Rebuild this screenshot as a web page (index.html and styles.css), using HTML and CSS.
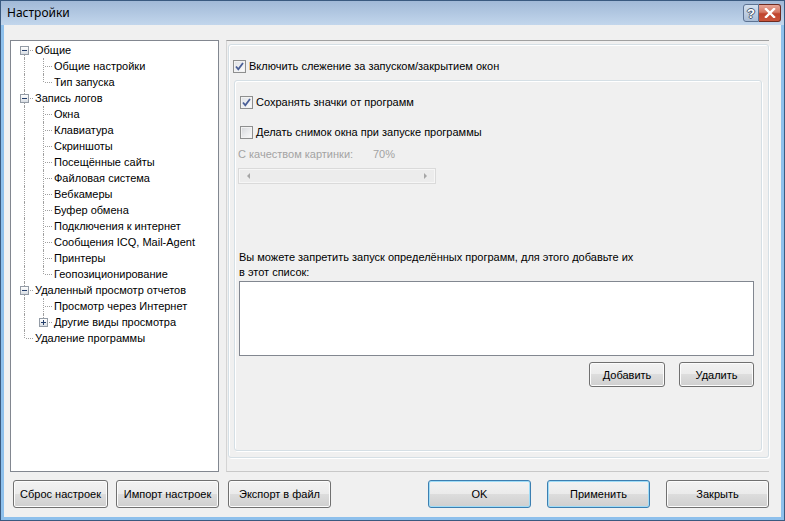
FILE: index.html
```html
<!DOCTYPE html>
<html lang="ru">

<head>
    <meta charset="UTF-8">
    <meta name="viewport" content="width=device-width, initial-scale=1.0">
    <title>Настройки</title>
    <link rel="stylesheet" href="styles.css">
</head>

<body>
    <div class="window">
        <div class="titlebar">
            <span class="title">Настройки</span>
            <div class="caption">
                <span class="capbtn help">?</span>
                <span class="capbtn close">
                    <svg width="12" height="10" viewBox="0 0 12 10">
                        <path d="M2 1 L10 9 M10 1 L2 9" stroke="#fff" stroke-width="2.4" stroke-linecap="square" fill="none"/>
                    </svg>
                </span>
            </div>
        </div>

        <div class="client">
            <div class="main">
                <div class="tree">
                    <div class="node"><span class="cell first"><span class="toggle"></span></span><span class="label">Общие</span></div>
                    <div class="node"><span class="cell line"></span><span class="cell mid"></span><span class="label">Общие настройки</span></div>
                    <div class="node"><span class="cell line"></span><span class="cell last"></span><span class="label">Тип запуска</span></div>
                    <div class="node"><span class="cell mid"><span class="toggle"></span></span><span class="label">Запись логов</span></div>
                    <div class="node"><span class="cell line"></span><span class="cell mid"></span><span class="label">Окна</span></div>
                    <div class="node"><span class="cell line"></span><span class="cell mid"></span><span class="label">Клавиатура</span></div>
                    <div class="node"><span class="cell line"></span><span class="cell mid"></span><span class="label">Скриншоты</span></div>
                    <div class="node"><span class="cell line"></span><span class="cell mid"></span><span class="label">Посещённые сайты</span></div>
                    <div class="node"><span class="cell line"></span><span class="cell mid"></span><span class="label">Файловая система</span></div>
                    <div class="node"><span class="cell line"></span><span class="cell mid"></span><span class="label">Вебкамеры</span></div>
                    <div class="node"><span class="cell line"></span><span class="cell mid"></span><span class="label">Буфер обмена</span></div>
                    <div class="node"><span class="cell line"></span><span class="cell mid"></span><span class="label">Подключения к интернет</span></div>
                    <div class="node"><span class="cell line"></span><span class="cell mid"></span><span class="label">Сообщения ICQ, Mail-Agent</span></div>
                    <div class="node"><span class="cell line"></span><span class="cell mid"></span><span class="label">Принтеры</span></div>
                    <div class="node"><span class="cell line"></span><span class="cell last"></span><span class="label">Геопозиционирование</span></div>
                    <div class="node"><span class="cell mid"><span class="toggle"></span></span><span class="label">Удаленный просмотр отчетов</span></div>
                    <div class="node"><span class="cell line"></span><span class="cell mid"></span><span class="label">Просмотр через Интернет</span></div>
                    <div class="node"><span class="cell line"></span><span class="cell last"><span class="toggle plus"></span></span><span class="label">Другие виды просмотра</span></div>
                    <div class="node"><span class="cell last"></span><span class="label">Удаление программы</span></div>
                </div>

                <div class="panel">
                    <div class="group-outer">
                        <div class="check top-check">
                            <span class="box checked">
                                <svg width="11" height="11" viewBox="0 0 11 11"><path d="M2 5.5 L4.3 8.3 L9 2" stroke="#4a5f97" stroke-width="1.8" fill="none"/></svg>
                            </span>
                            <span class="check-text">Включить слежение за запуском/закрытием окон</span>
                        </div>

                        <div class="group-inner">
                            <div class="check">
                                <span class="box checked">
                                    <svg width="11" height="11" viewBox="0 0 11 11"><path d="M2 5.5 L4.3 8.3 L9 2" stroke="#4a5f97" stroke-width="1.8" fill="none"/></svg>
                                </span>
                                <span class="check-text">Сохранять значки от программ</span>
                            </div>
                            <div class="check second">
                                <span class="box"></span>
                                <span class="check-text">Делать снимок окна при запуске программы</span>
                            </div>
                            <div class="quality">
                                <span class="quality-name">С качеством картинки:</span>
                                <span>70%</span>
                            </div>
                            <div class="slider">
                                <span class="arrow-left"></span>
                                <span class="arrow-right"></span>
                            </div>
                            <p class="note">Вы можете запретить запуск определённых программ, для этого добавьте их<br>в этот список:</p>
                            <div class="listbox"></div>
                            <div class="list-buttons">
                                <button class="btn add">Добавить</button>
                                <button class="btn remove">Удалить</button>
                            </div>
                        </div>
                    </div>
                </div>
            </div>

            <div class="footer">
                <button class="btn wide reset">Сброс настроек</button>
                <button class="btn wide">Импорт настроек</button>
                <button class="btn wide">Экспорт в файл</button>
                <button class="btn wide default ok">OK</button>
                <button class="btn wide default">Применить</button>
                <button class="btn wide">Закрыть</button>
            </div>
        </div>
    </div>
</body>

</html>
```

FILE: styles.css
```css
* {
    box-sizing: border-box;
}

body {
    margin: 0;
    font-family: "Liberation Sans", Arial, sans-serif;
    font-size: 11px;
    color: #000;
}

.window {
    display: flex;
    flex-direction: column;
    width: 785px;
    height: 521px;
    border: 1px solid #3a5a80;
    padding: 0 3px 3px 3px;
    background: linear-gradient(to bottom, #a1b9d7 0px, #c2d6ec 24px, #8ec0ec 24px, #8ec0ec 100%);
}

.titlebar {
    display: flex;
    align-items: flex-start;
    height: 24px;
}

.title {
    margin: 4px 0 0 3px;
    font-family: "Noto Sans", "Open Sans", sans-serif;
    font-size: 12px;
    line-height: 16px;
}

.caption {
    display: flex;
    margin-left: auto;
    margin-top: 3px;
}

.capbtn {
    display: flex;
    justify-content: center;
    align-items: center;
    height: 18px;
    border: 1px solid #5d7393;
}

.help {
    width: 16px;
    border-radius: 3px 0 0 3px;
    background: linear-gradient(to bottom, #d4e1f0, #aabdd6);
    color: #fff;
    font-weight: bold;
    font-size: 13px;
    text-shadow: -1px 0 #46556c, 1px 0 #46556c, 0 -1px #46556c, 0 1px #46556c;
}

.close {
    width: 22px;
    border-color: #6e2b21;
    border-left: none;
    border-radius: 0 3px 3px 0;
    background: linear-gradient(to bottom, #e8a698 0%, #d47763 45%, #c0442d 55%, #c9543b 100%);
}

.client {
    flex: 1;
    background-color: #f0f0f0;
}

.main {
    display: flex;
    gap: 7px;
    padding: 15px 0 0 6px;
}

/* tree view */

.tree {
    width: 209px;
    height: 432px;
    border: 1px solid #828790;
    background-color: #fff;
    padding-top: 1px;
}

.node {
    display: flex;
    height: 16px;
    line-height: 16px;
    white-space: nowrap;
}

.cell {
    position: relative;
    flex: none;
    width: 19px;
    height: 16px;
}

.cell::before,
.cell::after {
    content: "";
    position: absolute;
}

.line::before,
.mid::before {
    left: 13px;
    top: 0;
    bottom: 0;
    border-left: 1px dotted #a0a0a0;
}

.first::before {
    left: 13px;
    top: 8px;
    bottom: 0;
    border-left: 1px dotted #a0a0a0;
}

.last::before {
    left: 13px;
    top: 0;
    height: 8px;
    border-left: 1px dotted #a0a0a0;
}

.mid::after,
.first::after,
.last::after {
    left: 15px;
    top: 8px;
    width: 7px;
    border-top: 1px dotted #a0a0a0;
}

.toggle {
    position: absolute;
    z-index: 1;
    left: 9px;
    top: 4px;
    width: 9px;
    height: 9px;
    border: 1px solid #949ca6;
    background: linear-gradient(to bottom, #ffffff, #d8dde3);
}

.toggle::before {
    content: "";
    position: absolute;
    left: 1px;
    top: 3px;
    width: 5px;
    height: 1px;
    background-color: #243e6b;
}

.toggle.plus::after {
    content: "";
    position: absolute;
    left: 3px;
    top: 1px;
    width: 1px;
    height: 5px;
    background-color: #243e6b;
}

.label {
    margin-left: 5px;
}

/* right panel */

.panel {
    width: 543px;
    height: 432px;
    border-top: 1px solid #a0a0a0;
    border-left: 1px solid #d4d4d4;
    border-bottom: 1px solid #c8c8c8;
    padding: 3px 0 0 1px;
}

.group-outer {
    width: 541px;
    height: 414px;
    border: 1px solid #d5dfe5;
    border-radius: 3px;
    box-shadow: inset 1px 1px 0 #fff, 1px 1px 0 #fff;
    padding-top: 15px;
}

.check {
    display: flex;
    align-items: center;
    height: 13px;
    margin-left: 2px;
}

.top-check {
    margin-left: 4px;
}

.check.second {
    margin-top: 17px;
}

.box {
    display: flex;
    justify-content: center;
    align-items: center;
    width: 13px;
    height: 13px;
    border: 1px solid #8e8f8f;
    background: linear-gradient(135deg, #d4d6d9 0%, #e9eaec 50%, #fbfbfb 100%);
    box-shadow: inset 0 0 0 1px #f2f2f2;
}

.box.checked {
    background: linear-gradient(135deg, #dfe2e6 0%, #f0f1f3 60%, #fdfdfd 100%);
}

.check-text {
    margin-left: 3px;
    line-height: 13px;
    white-space: nowrap;
}

.group-inner {
    width: 528px;
    height: 371px;
    margin: 7px 0 0 5px;
    border: 1px solid #d5dfe5;
    border-radius: 3px;
    box-shadow: inset 1px 1px 0 #fff, 1px 1px 0 #fff;
    padding: 15px 0 0 3px;
}

.quality {
    display: flex;
    height: 14px;
    line-height: 14px;
    margin-top: 8px;
    color: #a3a3a3;
}

.quality-name {
    width: 135px;
}

.slider {
    position: relative;
    width: 198px;
    height: 16px;
    margin-top: 7px;
    border: 1px solid #dadada;
    background-color: #ececec;
    box-shadow: inset 0 0 0 1px #f6f6f6;
}

.arrow-left,
.arrow-right {
    position: absolute;
    top: 4px;
    width: 0;
    height: 0;
    border-top: 3px solid transparent;
    border-bottom: 3px solid transparent;
}

.arrow-left {
    left: 8px;
    border-right: 3px solid #a6a6a6;
}

.arrow-right {
    right: 8px;
    border-left: 3px solid #a6a6a6;
}

.note {
    margin: 66px 0 0 1px;
    line-height: 15px;
}

.listbox {
    width: 515px;
    height: 75px;
    margin: 1px 0 0 1px;
    border: 1px solid #828790;
    background-color: #fff;
}

.list-buttons {
    display: flex;
    justify-content: flex-end;
    gap: 14px;
    width: 515px;
    margin: 6px 0 0 1px;
}

/* buttons */

.btn {
    height: 25px;
    padding: 0;
    border: 1px solid #707070;
    border-radius: 3px;
    background: linear-gradient(to bottom, #f2f2f2 0%, #ebebeb 50%, #dddddd 50%, #cfcfcf 100%);
    box-shadow: inset 0 0 0 1px #fcfcfc;
    font-family: "Liberation Sans", Arial, sans-serif;
    font-size: 11px;
    color: #000;
}

.add {
    width: 76px;
}

.remove {
    width: 75px;
}

.footer {
    display: flex;
    gap: 16px;
    padding: 8px 0 0 9px;
}

.btn.wide {
    width: 103px;
    height: 28px;
}

.btn.reset {
    width: 95px;
    margin-right: -8px;
}

.footer .btn:nth-child(3) {
    margin-left: -7px;
}

.btn.ok {
    margin-left: 81px;
}

.btn.default {
    border-color: #3c7fb1;
    box-shadow: inset 0 0 0 1px #9fdcf7;
}
```
